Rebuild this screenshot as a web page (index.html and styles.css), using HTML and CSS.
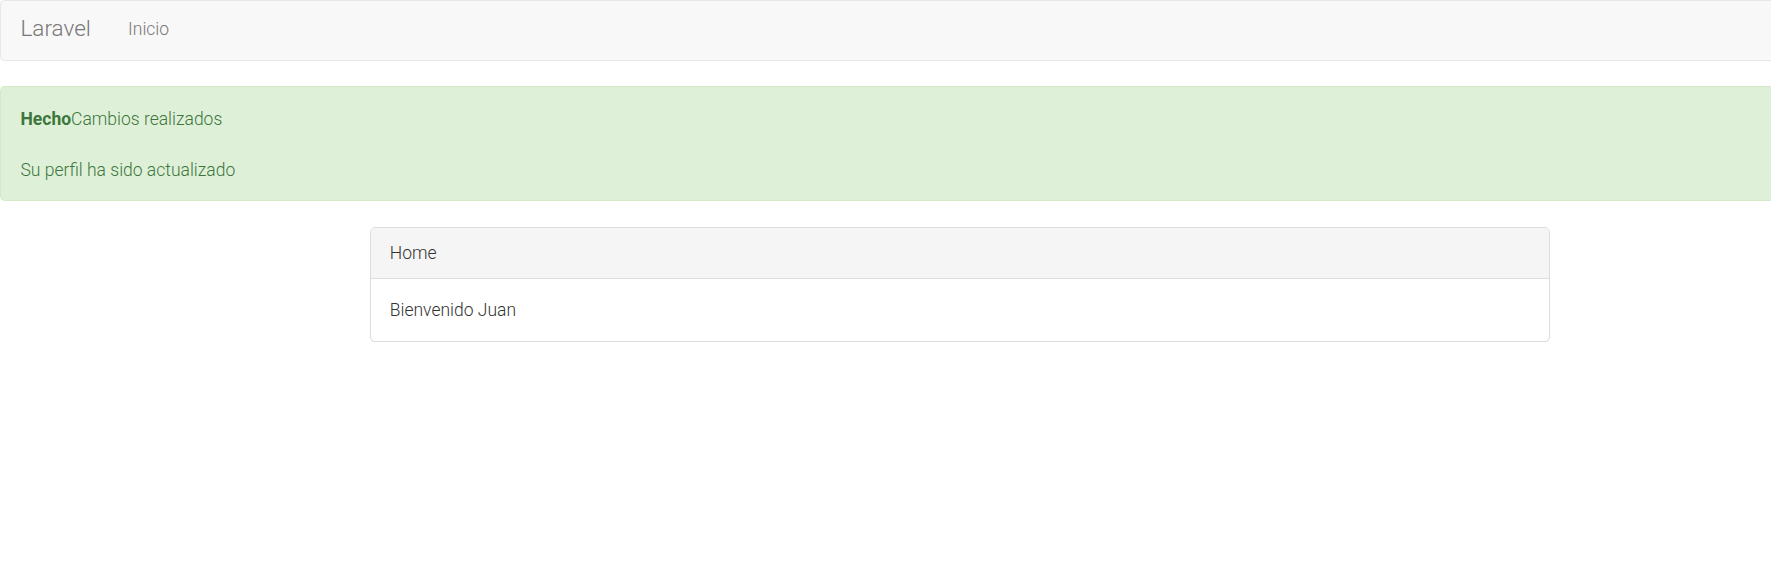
FILE: index.html
```html
<!DOCTYPE html>
<html lang="es">
<head>
<meta charset="utf-8">
<title>Laravel</title>
<link rel="stylesheet" href="styles.css">
</head>
<body>
<nav class="navbar">
  <a class="brand" href="#">Laravel</a>
  <ul class="nav-links">
    <li><a href="#">Inicio</a></li>
  </ul>
</nav>
<div class="alert">
  <p class="alert-line"><strong>Hecho</strong>Cambios realizados</p>
  <p class="alert-line">Su perfil ha sido actualizado</p>
</div>
<div class="panel">
  <div class="panel-heading">Home</div>
  <div class="panel-body">Bienvenido Juan</div>
</div>
</body>
</html>
```

FILE: styles.css
```css
html, body {
  margin: 0;
  padding: 0;
  background: #fff;
}
body {
  font-family: Roboto, "Noto Sans", sans-serif;
  font-weight: 300;
  font-size: 17.5px;
  color: #333;
  overflow-x: hidden;
}
a { text-decoration: none; }

.navbar {
  display: flex;
  align-items: flex-start;
  height: 59px;
  background: #f8f8f8;
  border: 1px solid #e7e7e7;
  border-right: none;
  border-radius: 5px 0 0 5px;
}
.brand {
  font-size: 22.5px;
  line-height: 25px;
  color: #777;
  padding: 14.8px 18.75px 0 19.5px;
}
.nav-links {
  list-style: none;
  margin: 0;
  padding: 0;
  display: flex;
}
.nav-links a {
  display: block;
  font-size: 17.5px;
  line-height: 25px;
  color: #777;
  padding: 15.5px 18.75px 0 18.5px;
}

.alert {
  margin-top: 25px;
  background: #dff0d8;
  border: 1px solid #d6e9c6;
  border-right: none;
  border-radius: 5px 0 0 5px;
  color: #3c763d;
  padding: 19.5px 18.75px 17.5px 19.5px;
}
.alert-line {
  margin: 0;
  line-height: 24.5px;
}
.alert-line + .alert-line {
  margin-top: 26.5px;
}
.alert-line strong {
  font-weight: 700;
}

.panel {
  margin: 26px 0 0 370px;
  width: 1178px;
  border: 1px solid #ddd;
  border-radius: 5px;
  box-shadow: 0 1px 1px rgba(0,0,0,0.05);
  overflow: hidden;
}
.panel-heading {
  background: #f5f5f5;
  border-bottom: 1px solid #ddd;
  padding: 13.5px 18.75px 11.5px;
  line-height: 25.5px;
  color: #333;
}
.panel-body {
  padding: 18.75px;
  line-height: 24.5px;
  color: #333;
}
```
